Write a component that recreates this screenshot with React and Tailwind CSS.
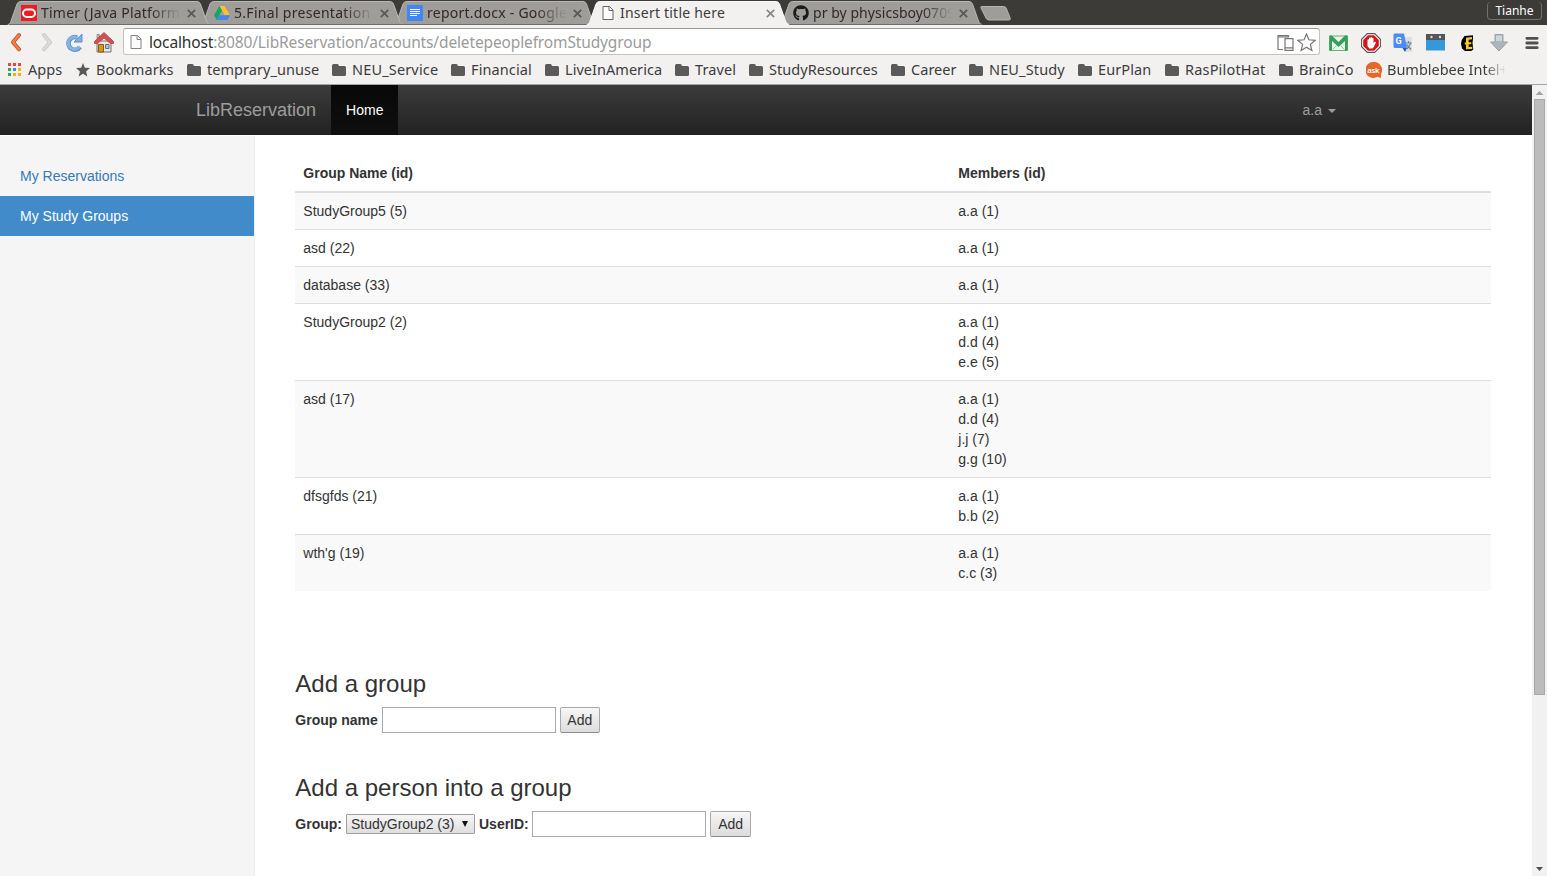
import { FaGithub } from "react-icons/fa";

const ui = "font-['Noto_Sans',sans-serif]";

const groups = [
  ["StudyGroup5 (5)", ["a.a (1)"]],
  ["asd (22)", ["a.a (1)"]],
  ["database (33)", ["a.a (1)"]],
  ["StudyGroup2 (2)", ["a.a (1)", "d.d (4)", "e.e (5)"]],
  ["asd (17)", ["a.a (1)", "d.d (4)", "j.j (7)", "g.g (10)"]],
  ["dfsgfds (21)", ["a.a (1)", "b.b (2)"]],
  ["wth'g (19)", ["a.a (1)", "c.c (3)"]],
];

function OracleIcon() {
  return (
    <svg width="16" height="16" viewBox="0 0 16 16">
      <rect width="16" height="16" fill="#ed1c24" />
      <rect x="2" y="4.5" width="12" height="7.5" rx="3.7" fill="none" stroke="#fff" strokeWidth="2" />
    </svg>
  );
}

function DriveIcon() {
  return (
    <svg width="16" height="16" viewBox="0 0 16 16">
      <path d="M5.4 1h5.2L16 10.3h-5.3z" fill="#fbc02d" />
      <path d="M5.4 1 0 10.3 2.7 15 8 5.6z" fill="#12a765" />
      <path d="M5.3 10.3H16L13.3 15H2.7z" fill="#4285f4" />
    </svg>
  );
}

function DocsIcon() {
  return (
    <svg width="16" height="16" viewBox="0 0 16 16">
      <rect width="16" height="16" rx="1" fill="#4285f4" />
      <path d="M3 4.500h10M3 6.500h10M3 8.500h10M3 10.500h7" stroke="#fff" strokeWidth="1" />
    </svg>
  );
}

function PageIcon({ className }) {
  return (
    <svg width="16" height="16" viewBox="0 0 16 16" className={className}>
      <path d="M3 1.5h6.5L13 5v9.5H3z" fill="#fbfbfb" stroke="#666" />
      <path d="M9 1.5v4h4" fill="none" stroke="#666" />
    </svg>
  );
}

const tabs = [
  { title: "Timer (Java Platform", icon: <OracleIcon />, look: "z-[5] tracking-[0.22px]" },
  { title: "5.Final presentation", icon: <DriveIcon />, look: "z-[4] tracking-[0.3px]" },
  { title: "report.docx - Google", icon: <DocsIcon />, look: "z-[3] tracking-[0.24px]" },
  { title: "Insert title here", icon: <PageIcon />, active: true, look: "z-10 tracking-[0.22px]" },
  { title: "pr by physicsboy0709", icon: <FaGithub size={16} color="#1b1b1b" />, look: "z-[1] tracking-[0.05px]" },
];

function Tab({ title, icon, active, look }) {
  return (
    <div className={`relative -mr-[13px] flex h-[25px] w-[206px] shrink-0 items-center pl-3.5 pt-px ${look}`}>
      <svg className="absolute inset-0" width="206" height="25" viewBox="0 0 206 25">
        <path
          d="M0 25C3 24 3 23 4 21L10 4Q11 1.500 13.500 1.500H190Q192.500 1.500 193.500 4L199.500 21C200.500 23 201 24 204 25Z"
          fill={active ? "#f2f1f0" : "#9e9d9a"}
        />
        <path
          d="M1 24.500C3 24 3.500 23 4 21L10 4Q11 1.500 13.500 1.500H190Q192.500 1.500 193.500 4L199.500 21C200.500 23 201 24 203 24.500"
          fill="none"
          stroke={active ? "#fafafa" : "#b9b8b5"}
        />
        {!active && <path d="M2 24.500H203" stroke="#6e6d69" />}
      </svg>
      <span className="relative flex">{icon}</span>
      <span
        className={`relative ml-1 w-[140px] whitespace-nowrap text-[14px] leading-5 ${
          active ? "text-[#3c3c3c]" : "text-[#33272a] [mask-image:linear-gradient(90deg,#000_78%,transparent)]"
        }`}
      >
        {title}
      </span>
      <svg className="relative ml-1.5" width="9" height="9" viewBox="0 0 9 9">
        <path d="M.8.8l7.400 7.400M8.200.8.800 8.200" stroke={active ? "#888" : "#5c5754"} strokeWidth="1.700" />
      </svg>
    </div>
  );
}

function TabStrip() {
  return (
    <div className="flex h-[25px] bg-[#3c3b37] pl-[7px]">
      {tabs.map((t) => (
        <Tab key={t.title} {...t} />
      ))}
      <svg className="ml-2 mt-[5px]" width="32" height="16" viewBox="0 0 32 16">
        <path d="M1.500 1.500h22q2 0 2.700 1.600l4 10q.6 1.900-1.200 1.900H9q-2 0-2.800-1.600L1 3q-.6-1.500.5-1.500z" fill="#9e9d9a" stroke="#b5b4b0" />
      </svg>
      <div className="ml-auto mr-[5px] mt-0.5 flex h-[18px] w-[55px] items-center justify-center rounded border border-t-0 border-[#71706b] pt-px text-[12px] leading-none text-white">
        Tianhe
      </div>
    </div>
  );
}

function NavIcons() {
  return (
    <>
      <svg width="14" height="20" viewBox="0 0 14 20" className="ml-[9px]">
        <path d="M10 3 4 10.300l6 7" fill="none" stroke="#c9532a" strokeWidth="4" strokeLinejoin="round" strokeLinecap="round" />
        <path d="M10 3 4 10.300l6 7" fill="none" stroke="#f08145" strokeWidth="2.200" strokeLinecap="round" />
      </svg>
      <svg width="14" height="20" viewBox="0 0 14 20" className="ml-[17px]">
        <path d="m4 3 6 7.300-6 7" fill="none" stroke="#cbc9c7" strokeWidth="4" strokeLinejoin="round" strokeLinecap="round" />
        <path d="m4 3 6 7.300-6 7" fill="none" stroke="#dddbd9" strokeWidth="2.200" strokeLinecap="round" />
      </svg>
      <svg width="20" height="20" viewBox="0 0 20 20" className="ml-2.5">
        <path d="M16 15A6.300 6.300 0 1 1 13 5.500" fill="none" stroke="#5b93cb" strokeWidth="4.600" />
        <path d="M18 2v8h-8l2.500-2.500 3-3z" fill="#7fb0df" stroke="#5b93cb" />
        <path d="M15.500 14.700A6.200 6.200 0 1 1 13.500 5.800" fill="none" stroke="#83b4e3" strokeWidth="3" />
      </svg>
      <svg width="22" height="22" viewBox="0 0 22 22" className="ml-[9px]">
        <path d="M4 10h14v11H4z" fill="#ece9e4" stroke="#77736d" />
        <path d="M4 3.500h2.500v5H4z" fill="#b9b5ae" stroke="#8b6e6a" strokeWidth=".6" />
        <path d="M11 1.500 20.500 10.500v2h-3L11 7l-6.500 5.500h-3v-2z" fill="#d64f50" stroke="#a94043" strokeWidth=".8" strokeLinejoin="round" />
        <path d="M5.500 13.500h5V21h-5z" fill="#d9951f" stroke="#8b5a12" />
        <path d="M12.500 13.500h3.500v4h-3.500z" fill="#a9c8e4" stroke="#66727c" />
      </svg>
    </>
  );
}

function Extensions() {
  return (
    <div className="flex items-center pt-0.5">
      <svg width="20" height="16" viewBox="0 0 20 16" className="ml-2">
        <path d="M1.500 1h18v14.500h-18z" fill="#e9f5ec" stroke="#6bb07c" />
        <path d="M1.500.500v15H4V6l6.500 6L17 6v9.500h2.500V.5H17L10.500 7 4 .5z" fill="#35a056" />
        <path d="m4.500 14.500 4-4M16.500 14.500l-4-4" stroke="#93c49f" />
      </svg>
      <svg width="20" height="20" viewBox="0 0 20 20" className="ml-[13px]">
        <path d="M6.300.6h7.400l5.700 5.700v7.400l-5.700 5.700H6.300L.6 13.700V6.300z" fill="#fff" stroke="#555" strokeWidth="1.100" />
        <path d="M6.900 2.200h6.200l4.700 4.700v6.200l-4.700 4.700H6.900l-4.700-4.700V6.900z" fill="#d8151d" />
        <path d="M6.500 11V6.800q.9-.9 1.500 0V5q.8-.8 1.500 0v-.6q.8-.9 1.500 0V5q.9-.8 1.500.2V10l1.300-1.200q1.200-.3 1.100.6L12.800 14l-1.300 1.500H8.300L6.500 13z" fill="#fff" />
      </svg>
      <svg width="20" height="20" viewBox="0 0 20 20" className="ml-3">
        <path d="M9 4h10v15h-7z" fill="#dedede" />
        <path d="M12.500 10h6M15.500 8v2M14 16l4-6M13.500 11.500l4.500 5" stroke="#64849a" strokeWidth="1.200" fill="none" />
        <path d="M1 .5h10L14 15H2q-1.500 0-1.500-1.500v-12Q.5.500 2 .5z" fill="#4b8bf5" />
        <path d="M9.500 15H14l-2 4z" fill="#2858be" />
        <text x="2.500" y="11" fontFamily="Roboto, sans-serif" fontSize="9" fontWeight="700" fill="#fff">G</text>
      </svg>
      <svg width="19" height="17" viewBox="0 0 19 17" className="ml-[13px]">
        <path d="M0 0h19v16.500H0z" fill="#3498db" />
        <path d="M0 0h19v6H0z" fill="#535557" />
        <circle cx="5.500" cy="3" r="1.200" fill="#ddd" />
        <circle cx="14" cy="3" r="1.200" fill="#ddd" />
      </svg>
      <svg width="16" height="16" viewBox="0 0 16 16" className="ml-[15px]">
        <path d="M4.500 1 13 .3v3.200L12.500 8l.8 6.500-2 1.500H5L2 13.500 1 9l.7-4z" fill="#050505" />
        <path d="M6 2.700 12 2v2.300L8.700 4.800v2.400h2.600v2H8.700v2.900l3.600-.3V14L6 14.300V9.500H4.800V7.600H6z" fill="#f6cb24" />
      </svg>
      <svg width="20" height="20" viewBox="0 0 20 20" className="ml-[13px]">
        <path d="M6 1.500h8V9h4.500L10 18 1.500 9H6z" fill="#aab6bc" stroke="#98a3a8" />
        <path d="M7 2.500h6V8H7z" fill="#ccd6dc" />
      </svg>
      <svg width="14" height="14" viewBox="0 0 14 14" className="ml-4">
        <path d="M1.800 2.300h10.400M1.800 7h10.400M1.800 11.700h10.400" stroke="#4f4f4f" strokeWidth="2.800" strokeLinecap="round" />
      </svg>
    </div>
  );
}

function Toolbar() {
  return (
    <div className="flex h-[35px] items-center bg-[#f2f1f0] pb-0.5">
      <NavIcons />
      <div className="ml-2 flex h-[27px] w-[1197px] items-center rounded-[3px] border border-[#c4c2bf] border-t-[#9c9a98] bg-white pr-[3px]">
        <PageIcon className="ml-1 mt-px opacity-80" />
        <span className="ml-[5px] whitespace-nowrap text-[15.5px] leading-6 tracking-[-0.135px] text-[#9b9b9b]">
          <span className="text-[#2f2f2f]">localhost</span>:8080/LibReservation/accounts/deletepeoplefromStudygroup
        </span>
        <svg width="17" height="16" viewBox="0 0 17 16" className="ml-auto mt-0.5" fill="none" stroke="#777" strokeWidth="1.200">
          <path d="M6 14.500H1V.6h10.500v2M1 2h10" />
          <path d="M8 3.600h8v11.800H8zM8 12.800h8" />
        </svg>
        <svg width="19" height="19" viewBox="0 0 19 19" className="ml-[3px] mt-px" fill="none" stroke="#777" strokeWidth="1.200">
          <path d="m9.500 1 2.400 5.800 6.300.5-4.800 4.100 1.500 6.100-5.400-3.300-5.400 3.300 1.500-6.100L.8 7.300l6.300-.5z" />
        </svg>
      </div>
      <Extensions />
    </div>
  );
}

function FolderIcon() {
  return (
    <svg width="14" height="12" viewBox="0 0 14 12" className="mt-0.5 shrink-0">
      <path d="M0 1.500Q0 0 1.500 0h4Q6.500 0 7 2h5.500Q14 2 14 3.500v7q0 1.500-1.500 1.500h-11Q0 12 0 10.500z" fill="#5a5a5a" />
    </svg>
  );
}

const folders = [
  ["temprary_unuse", "w-[145px]"],
  ["NEU_Service", "w-[119px] tracking-[0.16px]"],
  ["Financial", "w-[94px] tracking-[0.1px]"],
  ["LiveInAmerica", "w-[130px]"],
  ["Travel", "w-[74px] tracking-[0.1px]"],
  ["StudyResources", "w-[142px]"],
  ["Career", "w-[78px]"],
  ["NEU_Study", "w-[109px] tracking-[0.14px]"],
  ["EurPlan", "w-[87px] tracking-[0.1px]"],
  ["RasPilotHat", "w-[114px] tracking-[0.18px]"],
  ["BrainCo", "w-[88px] tracking-[0.1px]"],
];

function BookmarkBar() {
  return (
    <div className="flex h-[25px] items-center whitespace-nowrap border-b border-[#a5a4a2] bg-[#f2f1f0] pb-[7px] text-[14.5px] leading-5 tracking-[0.04px] text-[#3c3c3c]">
      <div className="flex w-[76px] shrink-0 items-center pl-2">
        <svg width="13" height="13" viewBox="0 0 13 13" className="mr-[7px] mt-0.5">
          <path d="M0 0h3v3H0zM5 0h3v3H5zM10 0h3v3h-3z" fill="#e8453c" />
          <path d="M0 5h3v3H0z" fill="#2da94f" />
          <path d="M5 5h3v3H5z" fill="#4285f4" />
          <path d="M10 5h3v3h-3zM5 10h3v3H5zM10 10h3v3h-3z" fill="#f5b400" />
          <path d="M0 10h3v3H0z" fill="#2da94f" />
        </svg>
        Apps
      </div>
      <div className="flex w-[111px] shrink-0 items-center">
        <svg width="14" height="14" viewBox="0 0 14 14" className="mr-1.5 mt-0.5">
          <path d="m7 0 1.900 4.700 5.100.4-3.900 3.300 1.200 5L7 10.700l-4.300 2.700 1.200-5L0 5.100l5.100-.4z" fill="#5a5a5a" />
        </svg>
        Bookmarks
      </div>
      {folders.map(([name, look]) => (
        <div key={name} className={`flex shrink-0 items-center gap-1.5 ${look}`}>
          <FolderIcon />
          {name}
        </div>
      ))}
      <div className="-ml-px flex w-[140px] shrink-0 items-center">
        <svg width="16" height="16" viewBox="0 0 16 16" className="mr-[5px] mt-0.5 shrink-0">
          <path d="M8 0a8 8 0 0 1 7 12v4l-3.500-1.200A8 8 0 1 1 8 0z" fill="#e8662a" />
          <text x="1.300" y="10.500" fontFamily="Noto Sans, sans-serif" fontSize="7.800" fontWeight="600" letterSpacing="-.3" fill="#fff">ask</text>
        </svg>
        <span className="w-[119px] tracking-[-0.02px] [mask-image:linear-gradient(90deg,#000_82%,transparent)]">Bumblebee Intel+</span>
      </div>
    </div>
  );
}

function Navbar() {
  return (
    <nav className="flex h-[50px] items-center bg-linear-to-b from-[#3c3c3c] to-[#222] pl-[196px] text-sm text-[#9d9d9d]">
      <span className="text-[18px] leading-5">LibReservation</span>
      <span className="ml-[15px] flex h-full items-center bg-linear-to-b from-[#080808] to-[#0f0f0f] px-[15px] text-white">Home</span>
      <span className="ml-auto mr-[196px] flex items-center">
        a.a
        <span className="ml-1.5 mt-0.5 border-x-4 border-t-4 border-x-transparent border-t-[#9d9d9d]" />
      </span>
    </nav>
  );
}

function GroupTable() {
  return (
    <table className="w-full table-fixed border-collapse text-left">
      <thead>
        <tr className="border-b-2 border-[#ddd]">
          <th className="w-[655px] p-2">Group Name (id)</th>
          <th className="p-2">Members (id)</th>
        </tr>
      </thead>
      <tbody>
        {groups.map(([name, members]) => (
          <tr key={name} className="border-t border-[#ddd] align-top odd:bg-[#f9f9f9]">
            <td className="p-2">{name}</td>
            <td className="p-2">
              {members.map((m) => (
                <div key={m}>{m}</div>
              ))}
            </td>
          </tr>
        ))}
      </tbody>
    </table>
  );
}

function AddButton({ className }) {
  return (
    <button className={`h-[26px] rounded-[2px] border border-[#a9a9a9] border-b-[#8c8c8c] bg-linear-to-b from-[#f6f6f6] to-[#dddddd] ${className}`}>
      Add
    </button>
  );
}

function Scrollbar() {
  return (
    <div className="flex w-[15px] flex-col items-center bg-[#f1f1f1]">
      <svg width="15" height="14" viewBox="0 0 15 14">
        <path d="M3.500 10 7.500 6l4 4z" fill="#a3a3a3" />
      </svg>
      <div className="h-[596px] w-[11px] border border-[#a8a8a8] bg-[#bcbcbc]" />
      <svg width="15" height="14" viewBox="0 0 15 14" className="mt-auto">
        <path d="M4 5h7l-3.500 4z" fill="#505050" />
      </svg>
    </div>
  );
}

export default function App() {
  return (
    <div className="flex h-[876px] w-[1547px] flex-col overflow-hidden bg-white">
      <header className={ui}>
        <TabStrip />
        <Toolbar />
        <BookmarkBar />
      </header>
      <div className="flex min-h-0 flex-1 font-['Liberation_Sans',Arial,sans-serif] text-sm leading-5 text-[#333]">
        <div className="flex min-w-0 flex-1 flex-col">
          <Navbar />
          <div className="flex min-h-0 flex-1">
            <aside className="mt-px w-[255.330px] shrink-0 border-r border-[#eee] bg-[#f5f5f5] pt-5">
              <div className="px-5 py-2.5 text-[#337ab7]">My Reservations</div>
              <div className="bg-[#428bca] px-5 py-2.5 text-white">My Study Groups</div>
            </aside>
            <main className="min-w-0 flex-1 overflow-hidden pl-10 pr-[41px] pt-5">
              <GroupTable />
              <h3 className="mt-20 text-2xl leading-[26px]">Add a group</h3>
              <form className="mt-2.5 flex items-center gap-1">
                <label className="font-bold">Group name</label>
                <input className="h-[26px] w-[174px] border border-[#a9a9a9]" />
                <AddButton className="px-[6.500px]" />
              </form>
              <h3 className="mt-[42px] text-2xl leading-[26px]">Add a person into a group</h3>
              <form className="mt-2.5 flex items-center gap-1">
                <label className="font-bold">Group:</label>
                <button className="flex h-5 w-[129px] items-center whitespace-nowrap rounded-[1px] border border-[#a0a0a0] bg-linear-to-b from-[#f6f6f6] to-[#dedede] pl-1 leading-none">
                  StudyGroup2 (3)
                  <svg width="6" height="6" viewBox="0 0 6 6" className="ml-2">
                    <path d="M0 0h6L3 6z" fill="#111" />
                  </svg>
                </button>
                <label className="font-bold">UserID:</label>
                <input className="-ml-[0.600px] h-[26px] w-[174px] border border-[#a9a9a9]" />
                <AddButton className="px-[7px]" />
              </form>
            </main>
          </div>
        </div>
        <Scrollbar />
      </div>
    </div>
  );
}
